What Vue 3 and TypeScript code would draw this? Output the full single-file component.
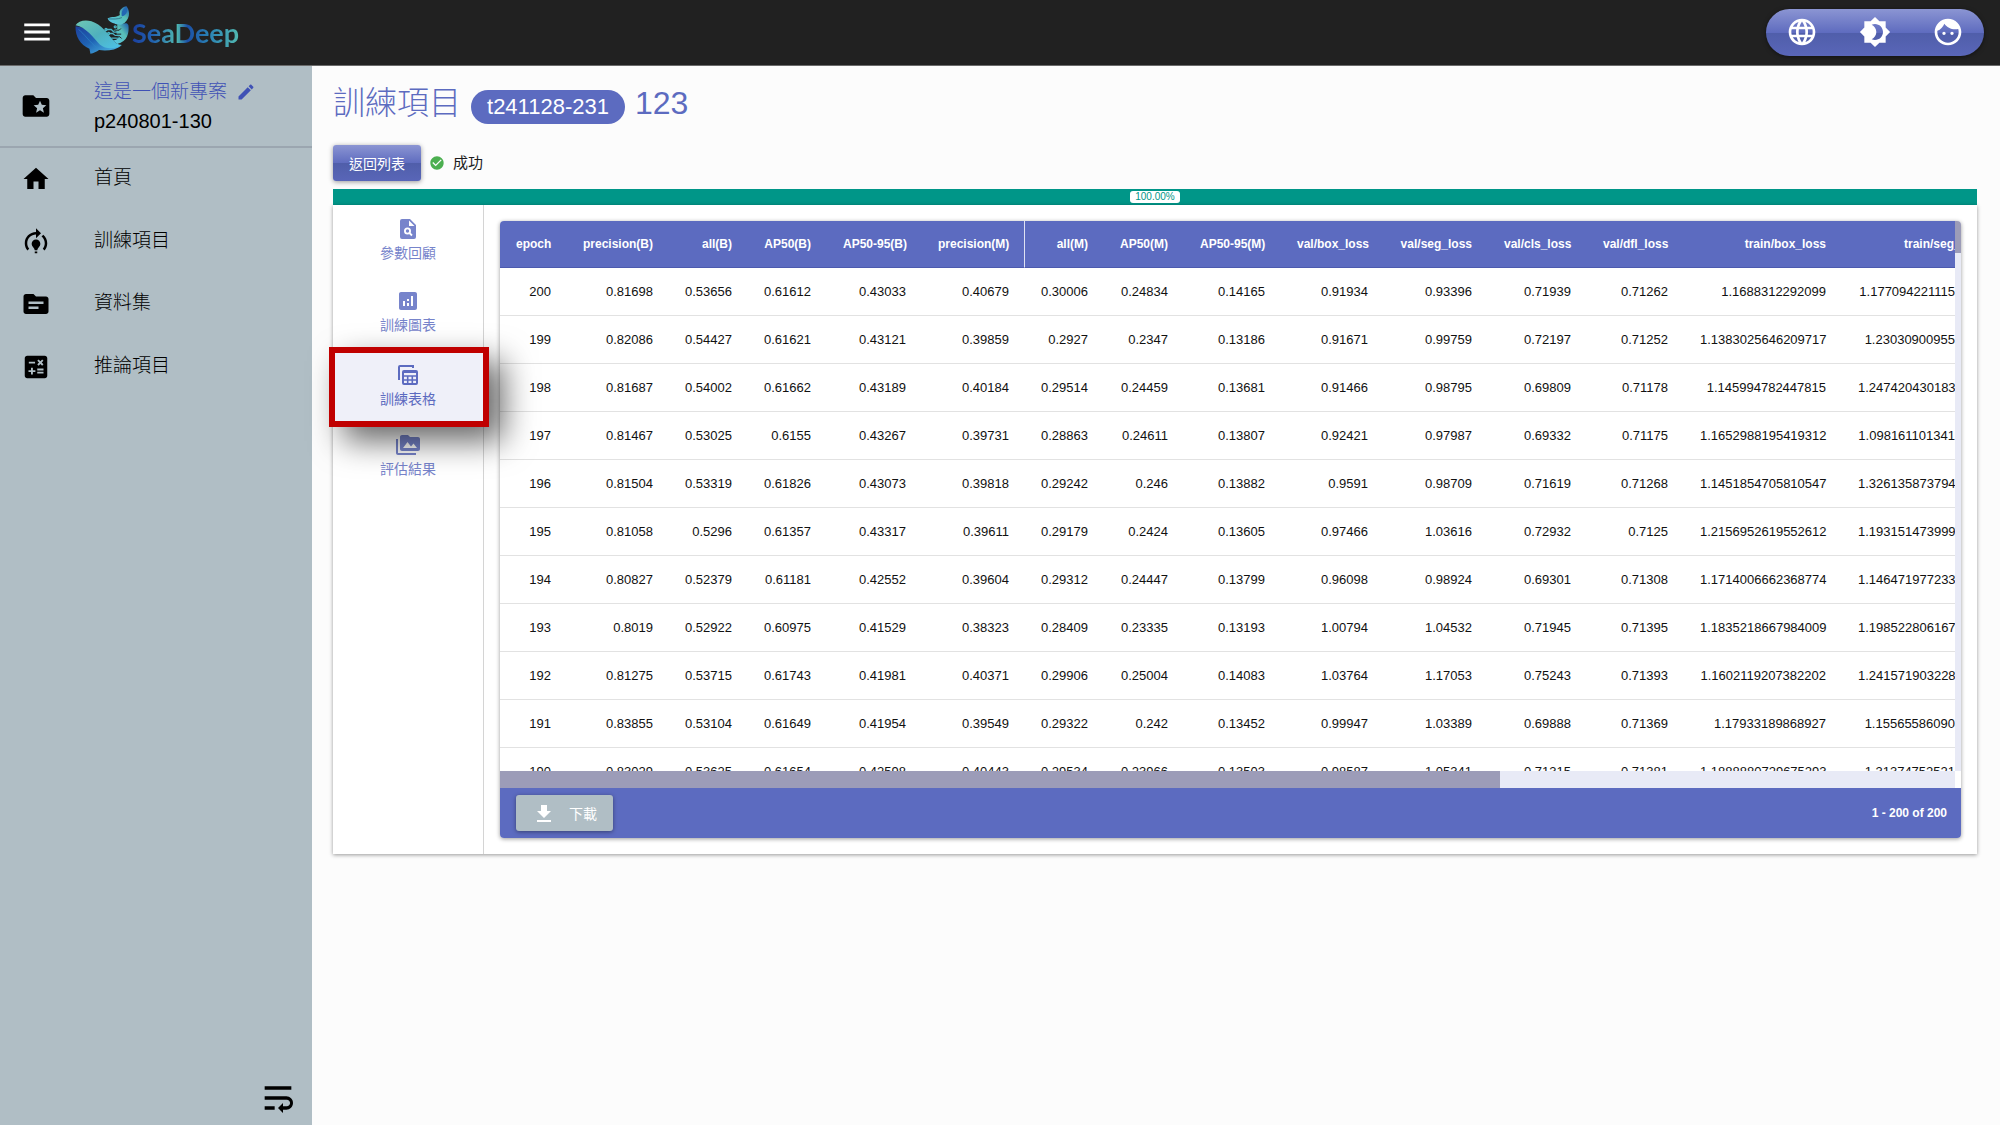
<script setup lang="ts">
interface NavItem {
  label: string
  path: string
}

const navItems: NavItem[] = [
  { label: '首頁', path: 'M10 20v-6h4v6h5v-8h3L12 3 2 12h3v8z' },
  {
    label: '訓練項目',
    path: 'M15.5 13.5c0 2-2.5 3.5-2.5 5h-2c0-1.5-2.5-3-2.5-5 0-1.93 1.57-3.5 3.5-3.5s3.5 1.57 3.5 3.5zm-2.5 6h-2V21h2v-1.5zm6-6.5c0 1.68-.59 3.21-1.58 4.42l1.42 1.42C20.18 17.27 21 15.23 21 13c0-2.74-1.23-5.19-3.16-6.84l-1.42 1.42C17.99 8.86 19 10.82 19 13zm-3-8l-4-4v3c-4.97 0-9 4.03-9 9 0 2.23.82 4.27 2.16 5.84l1.42-1.42C5.59 16.21 5 14.68 5 13c0-3.86 3.14-7 7-7v3l4-4z',
  },
  {
    label: '資料集',
    path: 'M20 6h-8l-2-2H4c-1.1 0-1.99.9-1.99 2L2 18c0 1.1.9 2 2 2h16c1.1 0 2-.9 2-2V8c0-1.1-.9-2-2-2zm-6 10H6v-2h8v2zm4-4H6v-2h12v2z',
  },
  {
    label: '推論項目',
    path: 'M19 3H5c-1.1 0-2 .9-2 2v14c0 1.1.9 2 2 2h14c1.1 0 2-.9 2-2V5c0-1.1-.9-2-2-2zm-5.97 4.06L14.09 6l1.41 1.41L16.91 6l1.06 1.06-1.41 1.41 1.41 1.41-1.06 1.06-1.41-1.4-1.41 1.41-1.06-1.06 1.41-1.41-1.41-1.42zm-6.78.66h5v1.5h-5v-1.5zM11.5 16h-2v2H8v-2H6v-1.5h2v-2h1.5v2h2V16zm6.5 1.25h-5v-1.5h5v1.5zm0-2.5h-5v-1.5h5v1.5z',
  },
]

const toolItems: NavItem[] = [
  {
    label: '語言',
    path: 'M11.99 2C6.47 2 2 6.48 2 12s4.47 10 9.99 10C17.52 22 22 17.52 22 12S17.52 2 11.99 2zm6.93 6h-2.95c-.32-1.25-.78-2.45-1.38-3.56 1.84.63 3.37 1.91 4.33 3.56zM12 4.04c.83 1.2 1.48 2.53 1.91 3.96h-3.82c.43-1.43 1.08-2.76 1.91-3.96zM4.26 14C4.1 13.36 4 12.69 4 12s.1-1.36.26-2h3.38c-.08.66-.14 1.32-.14 2s.06 1.34.14 2H4.26zm.82 2h2.95c.32 1.25.78 2.45 1.38 3.56-1.84-.63-3.37-1.9-4.33-3.56zm2.95-8H5.08c.96-1.66 2.49-2.93 4.33-3.56C8.81 5.55 8.35 6.75 8.03 8zM12 19.96c-.83-1.2-1.48-2.53-1.91-3.96h3.82c-.43 1.43-1.08 2.76-1.91 3.96zM14.34 14H9.66c-.09-.66-.16-1.32-.16-2s.07-1.35.16-2h4.68c.09.65.16 1.32.16 2s-.07 1.34-.16 2zm.25 5.56c.6-1.11 1.06-2.31 1.38-3.56h2.95c-.96 1.65-2.49 2.93-4.33 3.56zM16.36 14c.08-.66.14-1.32.14-2s-.06-1.34-.14-2h3.38c.16.64.26 1.31.26 2s-.1 1.36-.26 2h-3.38z',
  },
  {
    label: '佈景主題',
    path: 'M20 8.69V4h-4.69L12 .69 8.69 4H4v4.69L.69 12 4 15.31V20h4.69L12 23.31 15.31 20H20v-4.69L23.31 12 20 8.69zM12 18c-.89 0-1.74-.2-2.5-.55C11.56 16.5 13 14.42 13 12s-1.44-4.5-3.5-5.45C10.26 6.2 11.11 6 12 6c3.31 0 6 2.69 6 6s-2.69 6-6 6z',
  },
  {
    label: '使用者',
    path: 'M9 11.75c-.69 0-1.25.56-1.25 1.25s.56 1.25 1.25 1.25 1.25-.56 1.25-1.25-.56-1.25-1.25-1.25zm6 0c-.69 0-1.25.56-1.25 1.25s.56 1.25 1.25 1.25 1.25-.56 1.25-1.25-.56-1.25-1.25-1.25zM12 2C6.48 2 2 6.48 2 12s4.48 10 10 10 10-4.48 10-10S17.52 2 12 2zm0 18c-4.41 0-8-3.59-8-8 0-.29.02-.58.05-.86 2.36-1.05 4.23-2.98 5.21-5.37C11.07 8.33 14.05 10 17.42 10c.78 0 1.53-.09 2.25-.26.21.71.33 1.47.33 2.26 0 4.41-3.59 8-8 8z',
  },
]

interface Column {
  name: string
  width: number | null
}

// The last column takes whatever width is left.
const columns: Column[] = [
  { name: 'epoch', width: 67 },
  { name: 'precision(B)', width: 102 },
  { name: 'all(B)', width: 79 },
  { name: 'AP50(B)', width: 79 },
  { name: 'AP50-95(B)', width: 95 },
  { name: 'precision(M)', width: 103 },
  { name: 'all(M)', width: 79 },
  { name: 'AP50(M)', width: 80 },
  { name: 'AP50-95(M)', width: 97 },
  { name: 'val/box_loss', width: 103 },
  { name: 'val/seg_loss', width: 104 },
  { name: 'val/cls_loss', width: 99 },
  { name: 'val/dfl_loss', width: 97 },
  { name: 'train/box_loss', width: 158 },
  { name: 'train/seg_', width: null },
]

const rows: string[][] = [
  '200 0.81698 0.53656 0.61612 0.43033 0.40679 0.30006 0.24834 0.14165 0.91934 0.93396 0.71939 0.71262 1.1688312292099 1.177094221115',
  '199 0.82086 0.54427 0.61621 0.43121 0.39859 0.2927 0.2347 0.13186 0.91671 0.99759 0.72197 0.71252 1.1383025646209717 1.23030900955',
  '198 0.81687 0.54002 0.61662 0.43189 0.40184 0.29514 0.24459 0.13681 0.91466 0.98795 0.69809 0.71178 1.145994782447815 1.247420430183',
  '197 0.81467 0.53025 0.6155 0.43267 0.39731 0.28863 0.24611 0.13807 0.92421 0.97987 0.69332 0.71175 1.1652988195419312 1.098161101341',
  '196 0.81504 0.53319 0.61826 0.43073 0.39818 0.29242 0.246 0.13882 0.9591 0.98709 0.71619 0.71268 1.1451854705810547 1.326135873794',
  '195 0.81058 0.5296 0.61357 0.43317 0.39611 0.29179 0.2424 0.13605 0.97466 1.03616 0.72932 0.7125 1.2156952619552612 1.193151473999',
  '194 0.80827 0.52379 0.61181 0.42552 0.39604 0.29312 0.24447 0.13799 0.96098 0.98924 0.69301 0.71308 1.1714006662368774 1.146471977233',
  '193 0.8019 0.52922 0.60975 0.41529 0.38323 0.28409 0.23335 0.13193 1.00794 1.04532 0.71945 0.71395 1.1835218667984009 1.198522806167',
  '192 0.81275 0.53715 0.61743 0.41981 0.40371 0.29906 0.25004 0.14083 1.03764 1.17053 0.75243 0.71393 1.1602119207382202 1.241571903228',
  '191 0.83855 0.53104 0.61649 0.41954 0.39549 0.29322 0.242 0.13452 0.99947 1.03389 0.69888 0.71369 1.17933189868927 1.15565586090',
  '190 0.83029 0.53625 0.61654 0.42598 0.40443 0.29534 0.23966 0.13503 0.98587 1.05341 0.71315 0.71381 1.1888880729675293 1.31374752521',
].map((line) => line.split(' '))
</script>

<template>
  <div class="app">
    <header class="topbar">
      <button class="icon-button" aria-label="選單">
        <svg width="34" height="34" viewBox="0 0 24 24" fill="currentColor"><path d="M3 18h18v-2H3v2zm0-5h18v-2H3v2zm0-7v2h18V6H3z" /></svg>
      </button>
      <a class="brand" href="#">
        <svg class="whale" width="55" height="48" viewBox="225 15 165 145">
          <defs>
            <linearGradient id="whaleBack" x1="0" y1="0" x2="1" y2="1">
              <stop offset="0" stop-color="#6fc7b4" />
              <stop offset="0.5" stop-color="#4fb0bd" />
              <stop offset="1" stop-color="#4cc3ea" />
            </linearGradient>
            <linearGradient id="whaleBelly" x1="0" y1="0" x2="1" y2="1">
              <stop offset="0" stop-color="#1c3f9c" />
              <stop offset="0.45" stop-color="#1f63b4" />
              <stop offset="1" stop-color="#55c8ee" />
            </linearGradient>
            <linearGradient id="whaleTail" x1="0" y1="1" x2="1" y2="0">
              <stop offset="0" stop-color="#58c6ec" />
              <stop offset="0.6" stop-color="#58bfb6" />
              <stop offset="1" stop-color="#1d57ac" />
            </linearGradient>
          </defs>
          <path d="M226 76C225 106 240 132 268 144L271 159C280 159 290 152 297 148C320 152 348 148 365 134C338 140 318 138 300 124C278 102 258 76 226 76Z" fill="url(#whaleBelly)" />
          <path d="M226 73C234 60 254 55 274 61C304 70 322 98 338 116C346 126 354 132 366 133C344 146 318 146 300 132C280 110 258 79 226 73Z" fill="url(#whaleBack)" />
          <path d="M235 86C252 98 268 124 292 142" fill="none" stroke="#2b87c9" stroke-width="2" />
          <path d="M352 70C366 72 382 60 386 74C388 96 384 122 352 130L338 118C346 120 352 116 356 110L350 104V92L340 88L352 84Z" fill="url(#whaleTail)" />
          <path d="M323 52C336 46 350 50 360 42C356 30 366 18 380 16C392 32 390 52 374 66C362 74 350 72 344 68C338 66 326 62 323 52Z" fill="url(#whaleTail)" />
          <path d="M366 46C378 44 386 32 380 17C370 22 362 32 366 46Z" fill="#2367b3" />
          <path d="M326 54C340 54 352 56 366 50" fill="none" stroke="#21586e" stroke-width="2" />
          <g fill="none" stroke="#4bb3c4" stroke-width="4">
            <path d="M320 86h14l8 8h12M328 98h10l8 6h12M334 112h22" />
            <circle cx="318" cy="86" r="3" />
            <circle cx="326" cy="98" r="3" />
            <circle cx="346" cy="78" r="3" />
          </g>
          <g fill="none" stroke="#212121" stroke-width="3">
            <path d="M344 88h14l5-5M346 100h18M350 108h10l5 5" />
          </g>
        </svg>
        <span class="brand-name">SeaDeep</span>
      </a>
      <div class="tools">
        <button v-for="tool in toolItems" :key="tool.label" class="icon-button" :aria-label="tool.label">
          <svg width="32" height="32" viewBox="0 0 24 24" fill="currentColor"><path :d="tool.path" /></svg>
        </button>
      </div>
    </header>

    <div class="body">
      <aside class="sidebar">
        <div class="project">
          <svg width="32" height="32" viewBox="0 0 24 24" fill="currentColor"><path d="M20 6h-8l-2-2H4c-1.1 0-1.99.9-1.99 2L2 18c0 1.1.9 2 2 2h16c1.1 0 2-.9 2-2V8c0-1.1-.9-2-2-2zm-2.06 11L15 15.28 12.06 17l.78-3.33-2.59-2.24 3.41-.29L15 8l1.34 3.14 3.41.29-2.59 2.24.78 3.33z" /></svg>
          <div class="project-text">
            <a class="project-name" href="#">
              這是一個新專案
              <svg width="20" height="20" viewBox="0 0 24 24" fill="currentColor"><path d="M3 17.25V21h3.75L17.81 9.94l-3.75-3.75L3 17.25zM20.71 7.04c.39-.39.39-1.02 0-1.41l-2.34-2.34c-.39-.39-1.02-.39-1.41 0l-1.83 1.83 3.75 3.75 1.83-1.83z" /></svg>
            </a>
            <span class="project-id">p240801-130</span>
          </div>
        </div>
        <nav class="nav">
          <a v-for="item in navItems" :key="item.label" class="nav-item" href="#">
            <svg width="32" height="30" viewBox="0 0 24 24" fill="currentColor"><path :d="item.path" /></svg>
            <span>{{ item.label }}</span>
          </a>
        </nav>
        <button class="icon-button collapse" aria-label="收合">
          <svg width="40" height="40" viewBox="0 0 24 24" fill="currentColor"><path d="M4 19h6v-2H4v2zM20 5H4v2h16V5zm-3 6H4v2h13.25c1.1 0 2 .9 2 2s-.9 2-2 2H15v-2l-3 3 3 3v-2h2c2.21 0 4-1.79 4-4s-1.79-4-4-4z" /></svg>
        </button>
      </aside>

      <main class="main">
        <h1 class="title">
          <span>訓練項目</span>
          <span class="chip">t241128-231</span>
          <span>123</span>
        </h1>
        <div class="status">
          <button class="back">返回列表</button>
          <svg width="16" height="16" viewBox="0 0 24 24" fill="#4caf50"><path d="M12 2C6.48 2 2 6.48 2 12s4.48 10 10 10 10-4.48 10-10S17.52 2 12 2zm-2 15l-5-5 1.41-1.41L10 14.17l7.59-7.59L19 8l-9 9z" /></svg>
          <span class="status-text">成功</span>
        </div>
        <div class="progress"><span class="progress-label">100.00%</span></div>

        <section class="card">
          <div class="tabs">
            <button class="tab">
              <svg width="24" height="24" viewBox="0 0 24 24" fill="currentColor">
                <path d="M14 2H6a2 2 0 0 0-2 2v16a2 2 0 0 0 2 2h12a2 2 0 0 0 2-2V8zM13 3.500V9h5.500z" fill-rule="evenodd" />
                <circle cx="11.500" cy="14" r="2.600" fill="none" stroke="#fff" stroke-width="1.800" />
                <path d="M13.500 16l2.500 2.500" stroke="#fff" stroke-width="1.800" />
              </svg>
              <span>參數回顧</span>
            </button>
            <button class="tab">
              <svg width="24" height="24" viewBox="0 0 24 24" fill="currentColor"><path d="M19 3H5c-1.1 0-2 .9-2 2v14c0 1.1.9 2 2 2h14c1.1 0 2-.9 2-2V5c0-1.1-.9-2-2-2zM9 17H7v-5h2v5zm4 0h-2v-3h2v3zm0-5h-2v-2h2v2zm4 5h-2V7h2v10z" /></svg>
              <span>訓練圖表</span>
            </button>
            <button class="tab active">
              <svg width="24" height="24" viewBox="0 0 24 24" fill="none" stroke="currentColor" stroke-width="2">
                <path d="M3 17V4a1 1 0 0 1 1-1h13v2" />
                <rect x="7" y="8" width="14" height="13" rx="1" />
                <path d="M7 9h14" />
                <path d="M7 13h14M7 17h14M11.700 13v8M16.300 13v8" stroke-width="1.600" />
              </svg>
              <span>訓練表格</span>
            </button>
            <button class="tab">
              <svg width="24" height="24" viewBox="0 0 24 24" fill="currentColor"><path d="M2 6H0v5h.01L0 20c0 1.1.9 2 2 2h18v-2H2V6zm20-2h-8l-2-2H6c-1.1 0-1.99.9-1.99 2L4 16c0 1.1.9 2 2 2h16c1.1 0 2-.9 2-2V6c0-1.1-.9-2-2-2zM7 15l4.5-6 3.5 4.51 2.5-3.01L21 15H7z" /></svg>
              <span>評估結果</span>
            </button>
          </div>

          <div class="panel">
            <div class="grid">
              <div class="viewport">
                <div class="rows">
                  <table>
                    <colgroup>
                      <col v-for="col in columns" :key="col.name" :style="col.width ? { width: col.width + 'px' } : {}" />
                    </colgroup>
                    <thead>
                      <tr>
                        <th v-for="col in columns" :key="col.name" scope="col">{{ col.name }}</th>
                      </tr>
                    </thead>
                    <tbody>
                      <tr v-for="row in rows" :key="row[0]">
                        <td v-for="(cell, i) in row" :key="i">{{ cell }}</td>
                      </tr>
                    </tbody>
                  </table>
                </div>
                <div class="scroll-y"><div class="thumb-y"></div></div>
              </div>
              <div class="scroll-x"><div class="thumb-x"></div></div>
              <div class="footer">
                <button class="download">
                  <svg width="24" height="24" viewBox="0 0 24 24" fill="currentColor"><path d="M5 21h14v-2H5v2zM19 10h-4V4H9v6H5l7 7 7-7z" /></svg>
                  <span>下載</span>
                </button>
                <span class="range">1 - 200 of 200</span>
              </div>
            </div>
          </div>
        </section>
      </main>
    </div>
  </div>
</template>

<style>
body {
  margin: 0;
  background: #fcfcfc;
}
</style>

<style scoped>
* {
  box-sizing: border-box;
}

.app {
  display: flex;
  flex-direction: column;
  min-height: 100vh;
  font-family: "Liberation Sans", "Noto Sans CJK TC", sans-serif;
  font-weight: 300;
  color: #1d1d1d;
}

button {
  font: inherit;
  border: 0;
  padding: 0;
  cursor: pointer;
}

a {
  color: inherit;
  text-decoration: none;
}

svg {
  display: block;
  flex: none;
}

.icon-button {
  background: none;
  color: inherit;
}

.topbar {
  display: flex;
  align-items: center;
  height: 66px;
  padding: 0 16px 1px 20px;
  background: #212121;
  border-bottom: 1px solid #6a6a6a;
  color: #fff;
}

.brand {
  display: flex;
  align-items: center;
  gap: 2px;
  margin-left: 21px;
  padding-bottom: 5px;
}

.brand-name {
  font-family: Lato, sans-serif;
  font-size: 27px;
  line-height: 32px;
  font-weight: 700;
  margin-top: 6px;
  color: transparent;
  background: linear-gradient(90deg, #1b3f9f 0%, #2263b0 20%, #4fb8b0 42%, #1b4fa6 52%, #2a82b4 72%, #52b9b0 100%);
  background-clip: text;
  -webkit-background-clip: text;
}

.tools {
  display: flex;
  align-items: center;
  justify-content: space-between;
  width: 218px;
  height: 47px;
  margin-left: auto;
  padding: 0 20px;
  border-radius: 24px;
  background: linear-gradient(#8b95d3 0%, #5f6cbf 50%, #505eaa 51%, #5966b8 100%);
  box-shadow: 0 1px 4px rgba(0, 0, 0, 0.5);
}

.body {
  display: flex;
  flex: 1;
}

.sidebar {
  display: flex;
  flex-direction: column;
  flex: none;
  width: 312px;
  background: #b0bec5;
  color: #000;
}

.project {
  display: flex;
  align-items: center;
  gap: 42px;
  height: 82px;
  padding-left: 20px;
  border-bottom: 2px solid #9ba6b0;
}

.project-text {
  display: flex;
  flex-direction: column;
}

.project-name {
  display: flex;
  align-items: center;
  gap: 9px;
  font-size: 19px;
  line-height: 30px;
  color: #3f51b5;
}

.project-id {
  font-size: 20px;
  line-height: 28px;
}

.nav {
  display: grid;
  grid-auto-rows: 62px 63px;
}

.nav-item {
  display: flex;
  align-items: center;
  gap: 42px;
  padding-left: 20px;
  font-size: 19px;
  line-height: 24px;
}

.nav-item span {
  padding-bottom: 2px;
}

.collapse {
  align-self: flex-end;
  margin: auto 14px 7px 0;
}

.main {
  flex: 1;
  min-width: 0;
  padding: 12px 23px 24px 21px;
}

.title {
  display: flex;
  align-items: center;
  margin: 0;
  height: 50px;
  font-size: 32px;
  line-height: 48px;
  font-weight: 300;
  color: #5c6bc0;
}

.chip {
  height: 34px;
  margin: 8px 10px 0;
  padding: 0 16px;
  border-radius: 17px;
  background: #5c6bc0;
  color: #fff;
  font-size: 22px;
  line-height: 34px;
}

.status {
  display: flex;
  align-items: center;
  height: 36px;
  margin: 17px 0 8px;
  gap: 8px;
}

.back {
  height: 36px;
  width: 88px;
  border-radius: 3px;
  background: linear-gradient(#8b95d3 0%, #5f6cbf 50%, #505eaa 51%, #5966b8 100%);
  box-shadow: 0 1px 5px rgba(0, 0, 0, 0.4);
  color: #fff;
  font-size: 14px;
  font-weight: 400;
}

.status-text {
  padding-bottom: 4px;
  font-size: 15px;
  font-weight: 400;
}

.progress {
  display: flex;
  align-items: center;
  justify-content: center;
  height: 16px;
  background: #009688;
}

.progress-label {
  padding: 0 5px;
  border-radius: 3px;
  background: #fff;
  color: #009688;
  font-size: 10px;
  line-height: 12px;
}

.card {
  display: flex;
  background: #fff;
  box-shadow: 0 1px 4px rgba(0, 0, 0, 0.4);
}

.tabs {
  flex: none;
  width: 151px;
  border-right: 1px solid #d4d4d4;
}

.tab {
  display: flex;
  flex-direction: column;
  align-items: center;
  width: 100%;
  height: 72px;
  padding: 12px 0 0;
  background: none;
  color: #7784cb;
  font-size: 14px;
  font-weight: 400;
  line-height: 24px;
}

.tab.active {
  position: relative;
  padding-top: 14px;
  color: #5c6bc0;
  background: #eff0f9;
}

.tab.active::after {
  content: "";
  position: absolute;
  inset: -2px -6px -6px -4px;
  border: 6px solid #c00000;
  box-shadow: 14px 14px 32px rgba(0, 0, 0, 0.6);
}

.panel {
  flex: 1;
  min-width: 0;
  padding: 16px;
}

.grid {
  overflow: hidden;
  border-radius: 4px;
  background: #fff;
  box-shadow: 0 1px 4px rgba(0, 0, 0, 0.4);
}

.viewport {
  display: flex;
  height: 550px;
}

.rows {
  flex: 1;
  min-width: 0;
  overflow: hidden;
}

table {
  width: 100%;
  table-layout: fixed;
  border-collapse: separate;
  border-spacing: 0;
}

th,
td {
  height: 48px;
  padding: 0 16px;
  text-align: right;
  white-space: nowrap;
}

td:last-child {
  padding-right: 0;
}

th {
  height: 47px;
  background: #5c6bc0;
  border-bottom: 1px solid #4c5aae;
  color: #fff;
  font-size: 12px;
  font-weight: 700;
}

th:last-child {
  padding: 0 0 0 62px;
  text-align: left;
}

th:nth-child(6) {
  border-right: 1px solid #dfe2f3;
  padding-right: 15px;
}

td {
  border-bottom: 1px solid #e2e2e2;
  color: #111;
  font-size: 13px;
}

.scroll-y {
  flex: none;
  width: 6px;
  background: #e8eaf6;
}

.thumb-y {
  height: 32px;
  background: #9c9cb8;
}

.scroll-x {
  height: 17px;
  margin-right: 6px;
  background: #e8eaf6;
}

.thumb-x {
  width: 68.7%;
  height: 100%;
  background: #9c9cb8;
}

.footer {
  display: flex;
  align-items: center;
  justify-content: space-between;
  height: 50px;
  padding: 0 14px 0 16px;
  background: #5c6bc0;
  color: #fff;
}

.download {
  display: flex;
  align-items: center;
  gap: 13px;
  height: 36px;
  padding: 0 16px;
  border-radius: 3px;
  background: #b0bec5;
  box-shadow: 0 1px 4px rgba(0, 0, 0, 0.4);
  color: #fff;
  font-size: 14px;
  font-weight: 400;
}

.range {
  font-size: 12px;
  font-weight: 700;
}
</style>
